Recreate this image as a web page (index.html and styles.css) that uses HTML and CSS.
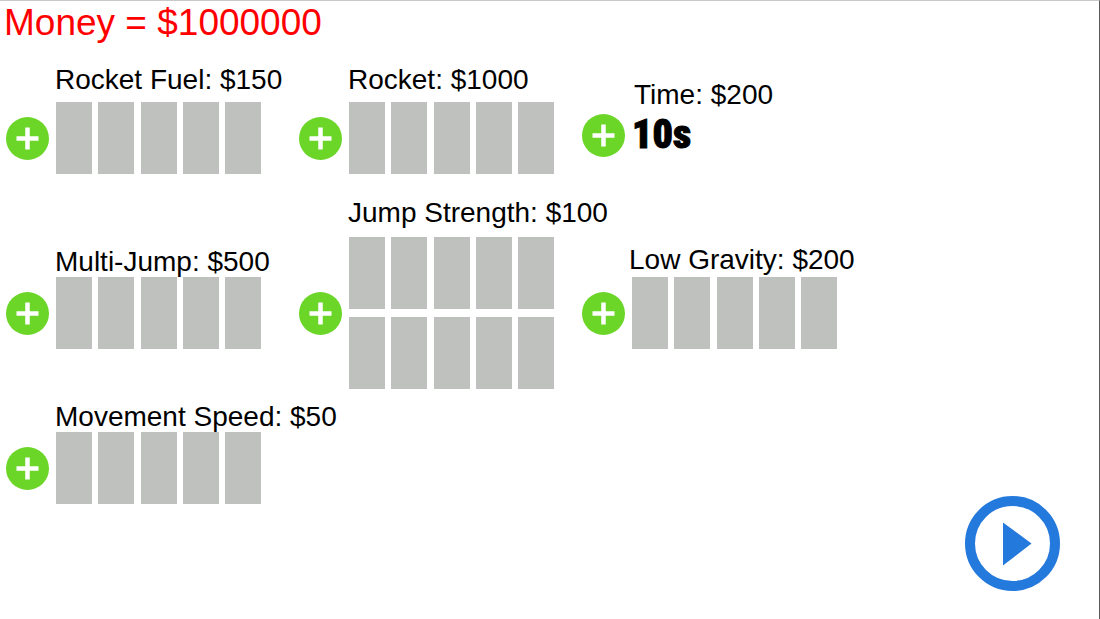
FILE: index.html
```html
<!DOCTYPE html>
<html lang="en">
<head>
<meta charset="utf-8">
<meta name="viewport" content="width=device-width, initial-scale=1">
<title>Upgrade Shop</title>
<link rel="stylesheet" href="styles.css">
</head>
<body>
<main class="shop">
  <h1 class="money">Money = $1000000</h1>
  <div class="upgrades">
    <section class="card card-top">
      <h2 class="label" id="fuel">Rocket Fuel: $150</h2>
      <button class="buy" type="button" aria-labelledby="fuel"><svg viewBox="0 0 43 43" aria-hidden="true"><path d="M21.5 10.5v22M10.5 21.5h22"/></svg></button>
      <div class="bars"><i></i><i></i><i></i><i></i><i></i></div>
    </section>
    <section class="card card-top">
      <h2 class="label" id="rocket">Rocket: $1000</h2>
      <button class="buy" type="button" aria-labelledby="rocket"><svg viewBox="0 0 43 43" aria-hidden="true"><path d="M21.5 10.5v22M10.5 21.5h22"/></svg></button>
      <div class="bars"><i></i><i></i><i></i><i></i><i></i></div>
    </section>
    <section class="card card-time">
      <h2 class="label" id="time">Time: $200</h2>
      <button class="buy" type="button" aria-labelledby="time"><svg viewBox="0 0 43 43" aria-hidden="true"><path d="M21.5 10.5v22M10.5 21.5h22"/></svg></button>
      <output class="seconds">10s</output>
    </section>

    <section class="card card-raised">
      <h2 class="label" id="multi">Multi-Jump: $500</h2>
      <button class="buy" type="button" aria-labelledby="multi"><svg viewBox="0 0 43 43" aria-hidden="true"><path d="M21.5 10.5v22M10.5 21.5h22"/></svg></button>
      <div class="bars"><i></i><i></i><i></i><i></i><i></i></div>
    </section>
    <section class="card card-double">
      <h2 class="label" id="jump">Jump Strength: $100</h2>
      <button class="buy" type="button" aria-labelledby="jump"><svg viewBox="0 0 43 43" aria-hidden="true"><path d="M21.5 10.5v22M10.5 21.5h22"/></svg></button>
      <div class="bars"><i></i><i></i><i></i><i></i><i></i><i></i><i></i><i></i><i></i><i></i></div>
    </section>
    <section class="card card-raised card-gravity">
      <h2 class="label" id="gravity">Low Gravity: $200</h2>
      <button class="buy" type="button" aria-labelledby="gravity"><svg viewBox="0 0 43 43" aria-hidden="true"><path d="M21.5 10.5v22M10.5 21.5h22"/></svg></button>
      <div class="bars"><i></i><i></i><i></i><i></i><i></i></div>
    </section>

    <section class="card">
      <h2 class="label" id="speed">Movement Speed: $50</h2>
      <button class="buy" type="button" aria-labelledby="speed"><svg viewBox="0 0 43 43" aria-hidden="true"><path d="M21.5 10.5v22M10.5 21.5h22"/></svg></button>
      <div class="bars"><i></i><i></i><i></i><i></i><i></i></div>
    </section>
    <button class="play" type="button" aria-label="Play">
      <svg viewBox="0 0 95 95" aria-hidden="true"><circle cx="47.5" cy="47.5" r="42.5"/><path d="M38 26.500L66.500 47.500L38 69.500Z"/></svg>
    </button>
  </div>
</main>
</body>
</html>
```
FILE: styles.css
```css
* {
  box-sizing: border-box;
}

body {
  margin: 0;
  background: #fff;
  color: #000;
  font-family: "Liberation Sans", Arial, sans-serif;
}

.shop {
  display: flex;
  flex-direction: column;
  min-height: 100vh;
  border-top: 1px solid #c8c8c8;
  border-right: 1px solid #5a5a5a;
}

.money {
  margin: 0;
  padding-left: 4px;
  color: #f00;
  font-size: 37px;
  font-weight: 400;
  line-height: 44px;
}

.upgrades {
  flex: 1;
  display: grid;
  grid-template-columns: 293fr 283fr 517fr;
  grid-template-rows: auto auto 1fr;
  row-gap: 13px;
  padding: 20px 0 28px 6px;
}

.card {
  display: grid;
  grid-template-columns: 43px 205px;
  column-gap: 7px;
  align-content: start;
}

.card-top {
  row-gap: 7px;
  margin-bottom: 11px;
}

.card-time {
  padding-top: 15px;
}

.card-raised {
  align-self: end;
  margin-bottom: 40px;
}

.card-gravity {
  row-gap: 2px;
}

.card-double {
  row-gap: 9px;
}

.label {
  grid-column: 2;
  margin: 0 0 0 -1px;
  font-size: 28px;
  font-weight: 400;
  line-height: 30px;
  white-space: nowrap;
}

.card-time .label {
  margin-left: 2px;
}

.card-gravity .label {
  margin-left: -3px;
}

.buy {
  grid-column: 1;
  align-self: center;
  width: 43px;
  height: 43px;
  padding: 0;
  border: 0;
  border-radius: 50%;
  background: #6bd628;
  cursor: pointer;
}

.buy svg {
  display: block;
  fill: none;
  stroke: #fff;
  stroke-width: 4.500;
}

.bars {
  display: grid;
  grid-template-columns: repeat(5, 36px);
  justify-content: space-between;
  row-gap: 8px;
}

.bars i {
  height: 72px;
  background: #bfc1be;
}

.seconds {
  font-family: Impact, "Liberation Sans Narrow", "Roboto Condensed", "Liberation Sans", sans-serif;
  font-size: 40px;
  font-weight: 900;
  line-height: 50px;
  -webkit-text-stroke: 1px #000;
}

.play {
  grid-column: 3;
  place-self: end;
  width: 95px;
  height: 95px;
  margin-right: 39px;
  padding: 0;
  border: 0;
  border-radius: 50%;
  background: none;
  cursor: pointer;
}

.play svg {
  display: block;
  fill: #2479dc;
}

.play circle {
  fill: none;
  stroke: #2479dc;
  stroke-width: 10;
}
```
